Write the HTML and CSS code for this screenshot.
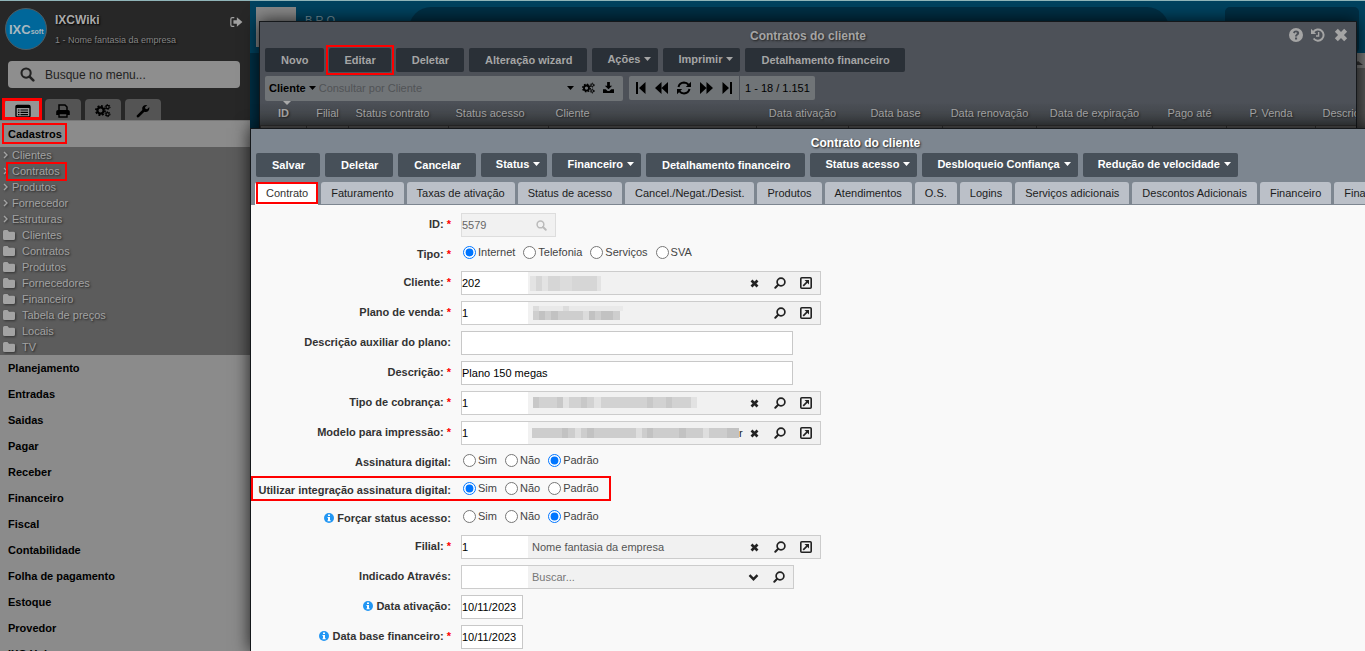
FILE: index.html
```html
<!DOCTYPE html>
<html lang="pt-BR">
<head>
<meta charset="utf-8">
<title>IXCWiki</title>
<link rel="stylesheet" href="styles.css">
</head>
<body>
<svg class="sprite" aria-hidden="true">
  <symbol id="search" viewBox="0 0 16 16"><circle cx="6.5" cy="6.5" r="4.9" fill="none" stroke="currentColor" stroke-width="2.2"/><path d="M10.2 10.2l4 4" stroke="currentColor" stroke-width="2.8" stroke-linecap="round"/></symbol>
  <symbol id="lens" viewBox="0 0 12 12"><circle cx="7" cy="5" r="3.9" fill="none" stroke="currentColor" stroke-width="1.7"/><path d="M4.2 7.800L1.300 10.700" stroke="currentColor" stroke-width="2" stroke-linecap="round"/></symbol>
  <symbol id="logout" viewBox="0 0 16 14"><path d="M6 2H3.500Q2 2 2 3.500v7Q2 12 3.500 12H6" fill="none" stroke="currentColor" stroke-width="1.400"/><path d="M5 5h4V1.500l6.500 5.500L9 12.500V9H5z" fill="currentColor"/></symbol>
  <symbol id="list" viewBox="0 0 16 14"><rect x="1" y="1.5" width="14" height="11.5" rx="1.2" fill="none" stroke="currentColor" stroke-width="1.4"/><path d="M1 1h14v3H1z" fill="currentColor"/><path d="M3 6h1.500M5.500 6H13M3 8.300h1.500M5.500 8.300H13M3 10.600h1.500M5.500 10.600H13" stroke="currentColor" stroke-width="1.2"/></symbol>
  <symbol id="print" viewBox="0 0 14 14"><path d="M3 6.500V1h6l2 2v3.500" fill="none" stroke="currentColor" stroke-width="1.500"/><path d="M2 6h10q1.800 0 1.800 1.800V11H11V9.200H3V11H.2V7.800Q.2 6 2 6z" fill="currentColor"/><path d="M3 9.500h8V13H3z" fill="none" stroke="currentColor" stroke-width="1.400"/></symbol>
  <symbol id="cogs" viewBox="0 0 16 14"><g fill="none" stroke="currentColor"><circle cx="5.500" cy="7" r="3.100" stroke-width="2.200"/><circle cx="5.500" cy="7" r="4.600" stroke-width="1.800" stroke-dasharray="1.900 1.710"/><circle cx="12.600" cy="3.500" r="1.600" stroke-width="1.200"/><circle cx="12.600" cy="3.500" r="2.500" stroke-width="1" stroke-dasharray="1.300 1.310"/><circle cx="12.600" cy="10.700" r="1.600" stroke-width="1.200"/><circle cx="12.600" cy="10.700" r="2.500" stroke-width="1" stroke-dasharray="1.300 1.310"/></g></symbol>
  <symbol id="wrench" viewBox="0 0 14 14"><path d="M1 11.200L6.300 6Q5.600 3.500 7.200 2 8.800.5 11.300 1L9 3.200l.4 1.600 1.700.4L13.300 3q.5 2.400-1 3.900-1.600 1.500-4 .9L3 13.100Q2 14 1 13T1 11.200z" fill="currentColor"/></symbol>
  <symbol id="folder" viewBox="0 0 12 10"><path d="M1.500 0h3L6 1.700h4.500Q12 1.700 12 3v5.500Q12 10 10.500 10h-9Q0 10 0 8.500v-7Q0 0 1.500 0z" fill="currentColor"/></symbol>
  <symbol id="chevron" viewBox="0 0 5 8"><path d="M1 1l3 3-3 3" fill="none" stroke="currentColor" stroke-width="1.400"/></symbol>
  <symbol id="caret" viewBox="0 0 7 4"><path d="M0 0h7L3.500 4z" fill="currentColor"/></symbol>
  <symbol id="download" viewBox="0 0 12 12"><path d="M4.500 0h3v4H10L6 8 2 4h2.500z" fill="currentColor"/><path d="M0 8h3l2 1.800h2L9 8h3v4H0z" fill="currentColor"/></symbol>
  <symbol id="first" viewBox="0 0 10 12"><path d="M0 0h2v12H0zM9.500 0v12L3 6z" fill="currentColor"/></symbol>
  <symbol id="prev" viewBox="0 0 13 12"><path d="M6.500 0v12L0 6zM13 0v12L6.500 6z" fill="currentColor"/></symbol>
  <symbol id="refresh" viewBox="0 0 14 14"><path d="M1.500 6Q2.500 1.800 7 1.600q2.800 0 4.700 2.300M12.500 8Q11.500 12.200 7 12.400q-2.800 0-4.700-2.300" fill="none" stroke="currentColor" stroke-width="2"/><path d="M14 .8V6H8.800zM0 13.200V8h5.200z" fill="currentColor"/></symbol>
  <symbol id="help" viewBox="0 0 14 14"><path fill-rule="evenodd" d="M7 0a7 7 0 100 14A7 7 0 007 0zM6 9.500h2.100v2H6zM4 4.800Q4.500 2.500 7 2.500c2 0 3.200 1.200 3.200 2.600 0 1.900-2.100 2-2.100 3.500H6c0-2.400 1.900-2.500 1.900-3.400 0-1.300-1.900-1.100-2.200.3z" fill="currentColor"/></symbol>
  <symbol id="history" viewBox="0 0 14 14"><path d="M2.300 4a5.600 5.600 0 11.300 6.500" fill="none" stroke="currentColor" stroke-width="2"/><path d="M0 .8V6h5.200z" fill="currentColor"/><path d="M7.600 4v4H5" fill="none" stroke="currentColor" stroke-width="1.400"/></symbol>
  <symbol id="close" viewBox="0 0 12 12"><path d="M2 2l8 8M10 2l-8 8" stroke="currentColor" stroke-width="3.600"/></symbol>
  <symbol id="open" viewBox="0 0 12 12"><rect x=".8" y=".8" width="10.400" height="10.400" rx="1" fill="none" stroke="currentColor" stroke-width="1.600"/><path d="M3.200 8.800l4-4" stroke="currentColor" stroke-width="1.700"/><path d="M4.500 3H9v4.500z" fill="currentColor"/></symbol>
  <symbol id="down" viewBox="0 0 10 7"><path d="M1 1.200l4 4 4-4" fill="none" stroke="currentColor" stroke-width="2.400"/></symbol>
  <symbol id="info" viewBox="0 0 10 10"><circle cx="5" cy="5" r="5" fill="#2196f3"/><path d="M4 1.500h2V3H4zM3.500 4H6v3.300h.7v1H3.500v-1H4V5h-.5z" fill="#fff"/></symbol>
</svg>

<div class="app">
  <aside class="sidebar">
    <header class="profile">
      <svg class="avatar" viewBox="0 0 42 42" role="img" aria-label="IXCsoft"><circle cx="21" cy="21" r="20.500" fill="#00679a" stroke="#4f5c62"/><text x="4" y="26" class="logo-main">IXC<tspan class="logo-sub">soft</tspan></text></svg>
      <div class="who"><strong>IXCWiki</strong><span>1 - Nome fantasia da empresa</span></div>
      <button class="plain logout" aria-label="Sair"><svg width="14" height="12"><use href="#logout"/></svg></button>
    </header>
    <label class="menu-search"><svg width="15" height="15"><use href="#search"/></svg><input type="text" aria-label="Busque no menu" placeholder="Busque no menu..."></label>
    <nav class="side-tabs">
      <button class="active marked" aria-label="Cadastros"><svg width="16" height="14"><use href="#list"/></svg></button>
      <button aria-label="Relatórios"><svg width="14" height="14"><use href="#print"/></svg></button>
      <button aria-label="Configurações"><svg width="16" height="15"><use href="#cogs"/></svg></button>
      <button aria-label="Ferramentas"><svg width="14" height="14"><use href="#wrench"/></svg></button>
    </nav>
    <nav class="menu">
      <a href="#" class="group"><span class="marked cadastros">Cadastros</span></a>
      <div class="submenu">
        <a href="#"><svg width="5" height="8"><use href="#chevron"/></svg>Clientes</a>
        <a href="#"><svg width="5" height="8"><use href="#chevron"/></svg><span class="marked contratos">Contratos</span></a>
        <a href="#"><svg width="5" height="8"><use href="#chevron"/></svg>Produtos</a>
        <a href="#"><svg width="5" height="8"><use href="#chevron"/></svg>Fornecedor</a>
        <a href="#"><svg width="5" height="8"><use href="#chevron"/></svg>Estruturas</a>
        <a href="#" class="dir"><svg width="12" height="10"><use href="#folder"/></svg>Clientes</a>
        <a href="#" class="dir"><svg width="12" height="10"><use href="#folder"/></svg>Contratos</a>
        <a href="#" class="dir"><svg width="12" height="10"><use href="#folder"/></svg>Produtos</a>
        <a href="#" class="dir"><svg width="12" height="10"><use href="#folder"/></svg>Fornecedores</a>
        <a href="#" class="dir"><svg width="12" height="10"><use href="#folder"/></svg>Financeiro</a>
        <a href="#" class="dir"><svg width="12" height="10"><use href="#folder"/></svg>Tabela de preços</a>
        <a href="#" class="dir"><svg width="12" height="10"><use href="#folder"/></svg>Locais</a>
        <a href="#" class="dir"><svg width="12" height="10"><use href="#folder"/></svg>TV</a>
      </div>
      <a href="#" class="group">Planejamento</a>
      <a href="#" class="group">Entradas</a>
      <a href="#" class="group">Saidas</a>
      <a href="#" class="group">Pagar</a>
      <a href="#" class="group">Receber</a>
      <a href="#" class="group">Financeiro</a>
      <a href="#" class="group">Fiscal</a>
      <a href="#" class="group">Contabilidade</a>
      <a href="#" class="group">Folha de pagamento</a>
      <a href="#" class="group">Estoque</a>
      <a href="#" class="group">Provedor</a>
      <a href="#" class="group">IXC Hub</a>
    </nav>
  </aside>

  <main class="desktop">
    <div class="backdrop">
      <div class="photo"></div><span class="org">B R O —</span><div class="pill"></div><div class="card"></div>
    </div>
    <div class="scroll"><svg width="6" height="4" viewBox="0 0 6 4"><path d="M0 4V1l1-1 5 4z" fill="#333"/></svg></div>

    <section class="window list-window">
      <div class="window-icons">
        <button class="plain" aria-label="Ajuda"><svg width="14" height="14"><use href="#help"/></svg></button>
        <button class="plain" aria-label="Histórico"><svg width="14" height="14"><use href="#history"/></svg></button>
        <button class="plain" aria-label="Fechar"><svg width="16" height="14"><use href="#close"/></svg></button>
      </div>
      <h2>Contratos do cliente</h2>
      <div class="actions">
        <button>Novo</button><button class="marked">Editar</button><button>Deletar</button><button>Alteração wizard</button>
        <button class="drop">Ações<svg width="7" height="4"><use href="#caret"/></svg></button>
        <button class="drop">Imprimir<svg width="7" height="4"><use href="#caret"/></svg></button>
        <button>Detalhamento financeiro</button>
      </div>
      <div class="filters">
        <div class="query">
          <button class="plain field-picker">Cliente<svg width="7" height="4"><use href="#caret"/></svg></button>
          <input type="text" aria-label="Consultar por Cliente" placeholder="Consultar por Cliente">
          <button class="plain" aria-label="Opções"><svg width="7" height="4"><use href="#caret"/></svg></button>
          <button class="plain" aria-label="Configurar"><svg width="13" height="12"><use href="#cogs"/></svg></button>
          <button class="plain" aria-label="Exportar"><svg width="11" height="11"><use href="#download"/></svg></button>
        </div>
        <div class="pager">
          <div class="pages">
            <button class="plain" aria-label="Primeira"><svg width="10" height="12"><use href="#first"/></svg></button>
            <button class="plain" aria-label="Anterior"><svg width="13" height="12"><use href="#prev"/></svg></button>
            <button class="plain" aria-label="Atualizar"><svg width="14" height="14"><use href="#refresh"/></svg></button>
            <button class="plain flip" aria-label="Próxima"><svg width="13" height="12"><use href="#prev"/></svg></button>
            <button class="plain flip" aria-label="Última"><svg width="10" height="12"><use href="#first"/></svg></button>
          </div>
          <span class="count">1 - 18 / 1.151</span>
        </div>
      </div>
      <div class="grid">
        <table>
          <colgroup><col class="c46"><col class="c42"><col class="c100"><col class="c100"><col class="c208"><col class="c92"><col class="c94"><col class="c94"><col class="c116"><col class="c74"><col class="c89"><col class="c100"></colgroup>
          <thead><tr><th class="sorted">ID</th><th>Filial</th><th class="left">Status contrato</th><th class="left">Status acesso</th><th class="left">Cliente</th><th>Data ativação</th><th>Data base</th><th>Data renovação</th><th>Data de expiração</th><th>Pago até</th><th>P. Venda</th><th class="left">Descrição</th></tr></thead>
          <tbody><tr><td></td><td></td><td></td><td></td><td></td><td></td><td></td><td></td><td></td><td></td><td></td><td></td></tr></tbody>
        </table>
      </div>
    </section>

    <section class="window form-window">
      <h2>Contrato do cliente</h2>
      <div class="actions">
        <button>Salvar</button><button>Deletar</button><button>Cancelar</button>
        <button class="drop">Status<svg width="7" height="4"><use href="#caret"/></svg></button>
        <button class="drop">Financeiro<svg width="7" height="4"><use href="#caret"/></svg></button>
        <button>Detalhamento financeiro</button>
        <button class="drop">Status acesso<svg width="7" height="4"><use href="#caret"/></svg></button>
        <button class="drop">Desbloqueio Confiança<svg width="7" height="4"><use href="#caret"/></svg></button>
        <button class="drop">Redução de velocidade<svg width="7" height="4"><use href="#caret"/></svg></button>
      </div>
      <nav class="tabs">
        <button class="active marked">Contrato</button><button>Faturamento</button><button>Taxas de ativação</button><button>Status de acesso</button><button>Cancel./Negat./Desist.</button><button>Produtos</button><button>Atendimentos</button><button>O.S.</button><button>Logins</button><button>Serviços adicionais</button><button>Descontos Adicionais</button><button>Financeiro</button><button>Financeiro</button>
      </nav>
      <form class="form">
        <div class="row"><label for="id">ID: <i>*</i></label><div class="lookup locked"><input id="id" type="text" value="5579" disabled><svg class="faint" width="11" height="11"><use href="#search"/></svg></div></div>
        <div class="row radios"><span class="label">Tipo: <i>*</i></span><div class="options"><label><input type="radio" name="tipo" checked>Internet</label><label><input type="radio" name="tipo">Telefonia</label><label><input type="radio" name="tipo">Serviços</label><label><input type="radio" name="tipo">SVA</label></div></div>
        <div class="row"><label for="cliente">Cliente: <i>*</i></label><div class="lookup"><input id="cliente" type="text" value="202"><span class="value"><svg width="73" height="16"><path fill="#e3e3e3" d="M2 1h71v15H2z"/><path fill="#d6d6d6" d="M8 1h6v15H8zM20 1h12v15H20zM44 1h25v15H44z"/><path fill="#dcdcdc" d="M32 1h12v15H32z"/></svg></span><button type="button" class="plain" aria-label="Limpar"><svg width="9" height="9"><use href="#close"/></svg></button><button type="button" class="plain" aria-label="Buscar"><svg width="12" height="12"><use href="#lens"/></svg></button><button type="button" class="plain" aria-label="Abrir"><svg width="12" height="12"><use href="#open"/></svg></button></div></div>
        <div class="row"><label for="plano">Plano de venda: <i>*</i></label><div class="lookup"><input id="plano" type="text" value="1"><span class="value"><svg width="96" height="14"><path fill="#e9e9e9" d="M5 0h90v5H5z"/><path fill="#cecece" d="M5 5h87v9H5z"/><path fill="#c2c2c2" d="M11 5h6v9h-6zM23 5h7v9h-7zM61 5h6v9h-6zM73 5h12v9H73z"/><path fill="#dcdcdc" d="M5 0h6v5H5zM35 0h6v5h-6zM55 5h6v9h-6z"/></svg></span><button type="button" class="plain" aria-label="Buscar"><svg width="12" height="12"><use href="#lens"/></svg></button><button type="button" class="plain" aria-label="Abrir"><svg width="12" height="12"><use href="#open"/></svg></button></div></div>
        <div class="row"><label for="aux">Descrição auxiliar do plano:</label><input id="aux" class="text" type="text"></div>
        <div class="row"><label for="desc">Descrição: <i>*</i></label><input id="desc" class="text" type="text" value="Plano 150 megas"></div>
        <div class="row"><label for="cobranca">Tipo de cobrança: <i>*</i></label><div class="lookup"><input id="cobranca" type="text" value="1"><span class="value"><svg width="169" height="12"><path fill="#d2d2d2" d="M5 0h158v11H5z"/><path fill="#c8c8c8" d="M5 0h6v11H5zM29 0h6v11h-6zM53 0h6v11h-6zM119 0h6v11h-6zM138 0h6v11h-6z"/><path fill="#e2e2e2" d="M35 0h6v11h-6zM66 0h7v11h-7zM163 0h6v11h-6z"/></svg></span><button type="button" class="plain" aria-label="Limpar"><svg width="9" height="9"><use href="#close"/></svg></button><button type="button" class="plain" aria-label="Buscar"><svg width="12" height="12"><use href="#lens"/></svg></button><button type="button" class="plain" aria-label="Abrir"><svg width="12" height="12"><use href="#open"/></svg></button></div></div>
        <div class="row"><label for="modelo">Modelo para impressão: <i>*</i></label><div class="lookup"><input id="modelo" type="text" value="1"><span class="value"><svg width="211" height="10"><path fill="#cdcdcd" d="M4 0h207v10H4z"/><path fill="#c2c2c2" d="M34 0h6v10h-6zM59 0h7v10h-7zM119 0h6v10h-6zM151 0h7v10h-7zM199 0h12v10h-12z"/><path fill="#dedede" d="M47 0h6v10h-6zM108 0h6v10h-6zM175 0h6v10h-6z"/></svg>r</span><button type="button" class="plain" aria-label="Limpar"><svg width="9" height="9"><use href="#close"/></svg></button><button type="button" class="plain" aria-label="Buscar"><svg width="12" height="12"><use href="#lens"/></svg></button><button type="button" class="plain" aria-label="Abrir"><svg width="12" height="12"><use href="#open"/></svg></button></div></div>
        <div class="row radios"><span class="label">Assinatura digital:</span><div class="options"><label><input type="radio" name="ass">Sim</label><label><input type="radio" name="ass">Não</label><label><input type="radio" name="ass" checked>Padrão</label></div></div>
        <div class="row radios marked"><span class="label">Utilizar integração assinatura digital:</span><div class="options"><label><input type="radio" name="int" checked>Sim</label><label><input type="radio" name="int">Não</label><label><input type="radio" name="int">Padrão</label></div></div>
        <div class="row radios"><span class="label"><svg width="10" height="10"><use href="#info"/></svg>Forçar status acesso:</span><div class="options"><label><input type="radio" name="forcar">Sim</label><label><input type="radio" name="forcar">Não</label><label><input type="radio" name="forcar" checked>Padrão</label></div></div>
        <div class="row"><label for="filial">Filial: <i>*</i></label><div class="lookup"><input id="filial" type="text" value="1"><span class="value text-value">Nome fantasia da empresa</span><button type="button" class="plain" aria-label="Limpar"><svg width="9" height="9"><use href="#close"/></svg></button><button type="button" class="plain" aria-label="Buscar"><svg width="12" height="12"><use href="#lens"/></svg></button><button type="button" class="plain" aria-label="Abrir"><svg width="12" height="12"><use href="#open"/></svg></button></div></div>
        <div class="row"><label for="indicado">Indicado Através:</label><div class="lookup short"><input id="indicado" type="text"><span class="value text-value hint">Buscar...</span><button type="button" class="plain" aria-label="Expandir"><svg width="11" height="7"><use href="#down"/></svg></button><button type="button" class="plain" aria-label="Buscar"><svg width="12" height="12"><use href="#lens"/></svg></button></div></div>
        <div class="row"><label for="ativacao"><svg width="10" height="10"><use href="#info"/></svg>Data ativação:</label><input id="ativacao" class="text date" type="text" value="10/11/2023"></div>
        <div class="row"><label for="base"><svg width="10" height="10"><use href="#info"/></svg>Data base financeiro: <i>*</i></label><input id="base" class="text date" type="text" value="10/11/2023"></div>
      </form>
    </section>
  </main>
</div>
</body>
</html>
```
FILE: styles.css
```css
* { box-sizing: border-box; }
body {
  margin: 0;
  overflow: hidden;
  font: 11px/16px "Liberation Sans", Arial, sans-serif;
  color: #333;
}
button, input { font: inherit; color: inherit; }
button { margin: 0; cursor: pointer; }
svg { display: block; flex: none; }
a { color: inherit; text-decoration: none; }
h2 { margin: 0; text-align: center; font-size: 12px; line-height: 16px; }
.sprite { position: absolute; width: 0; height: 0; }
.plain { display: flex; align-items: center; justify-content: center; padding: 0; border: 0; background: none; }

.app {
  display: grid;
  grid-template-columns: 250px 1fr;
  height: 100vh;
  overflow: hidden;
  border-top: 1px solid #8fb4b8;
}

/* Red callout frames */
.marked { position: relative; }
.marked::after {
  content: "";
  position: absolute;
  inset: -3px;
  border: 2px solid #f00;
  pointer-events: none;
  z-index: 2;
}

/* Sidebar */
.sidebar { overflow: hidden; background: #272727; }
.profile { display: flex; gap: 8px; padding: 7px 7px 0 5px; height: 60px; }
.avatar { width: 42px; height: 42px; }
.logo-main { font: 900 13px "Liberation Sans", Arial, sans-serif; fill: #a7b8c0; }
.logo-sub { font-size: 7px; }
.who { flex: 1; padding-top: 4px; color: #aaa; text-shadow: 1px 1px 2px #000; }
.who strong { display: block; font-size: 12px; line-height: 16px; }
.who span { display: block; padding-top: 5px; font-size: 9px; line-height: 14px; color: #858585; }
.logout { height: 28px; color: #a0a0a0; }
.menu-search {
  display: flex;
  align-items: center;
  gap: 10px;
  margin: 0 10px 0 8px;
  padding-left: 12px;
  height: 27px;
  border-radius: 4px;
  background: #8e8e8e;
  color: #222;
}
.menu-search input { flex: 1; min-width: 0; border: 0; padding: 0; background: none; outline: 0; font-size: 12px; }
.menu-search input::placeholder { color: #222; opacity: 1; }
.side-tabs { display: flex; gap: 4px; padding: 11px 0 0 5px; }
.side-tabs button {
  display: flex;
  align-items: center;
  justify-content: center;
  width: 36px;
  height: 21px;
  padding: 2px 0 0;
  border: 0;
  border-radius: 4px 4px 0 0;
  background: #545454;
  color: #000;
}
.side-tabs .active { background: #959595; }
.side-tabs .marked::after { inset: -1px -1px 0 -3px; border-width: 3px; }
.menu { background: #8b8b8b; border-top: 1px solid #777; }
.group { display: flex; align-items: center; height: 26px; padding-left: 8px; font-weight: bold; color: #000; }
.cadastros::after { inset: -3px -5px -2px -6px; }
.submenu { background: #5c5c5c; color: #a3a3a3; text-shadow: 1px 1px 2px #222; }
.submenu a { display: flex; align-items: center; gap: 4px; height: 16px; padding-left: 3px; }
.submenu .dir { gap: 7px; }
.submenu svg { filter: drop-shadow(1px 1px 1px #333); }
.contratos::after { inset: -1px -7px -2px -6px; }

/* Desktop behind the windows */
.desktop { position: relative; min-width: 0; background: #002f45; }
.backdrop { display: flex; height: 52px; padding: 6px 6px 0; background: #00425f; }
.photo { width: 40px; height: 40px; background: #888; }
.org { padding: 5px 0 0 9px; color: #7c98a2; }
.pill { flex: 1; margin: 0 56px 0 60px; border-radius: 22px; background: #002f45; }
.card { width: 134px; border-radius: 5px; background: #002f45; }
.scroll { position: absolute; top: 52px; right: 0; width: 8px; height: 90px; padding-top: 6px; background: #555; border-top: 15px solid #777; }
.scroll svg { margin-top: -13px; }

/* Windows */
.window { position: absolute; border: 1px solid #15181b; box-shadow: 0 0 16px rgba(0, 0, 0, .8); }
.list-window { top: 20px; left: 9px; right: 8px; height: 110px; padding-top: 6px; background: linear-gradient(#4d5158 80px, #3c4043 104px); color: #a5a5a5; }
.form-window { top: 127px; left: 0; right: -116px; bottom: 0; display: flex; flex-direction: column; padding-top: 6px; background: #7d8690; color: #fff; border-bottom: 0; }
.window h2 { text-shadow: 1px 1px 2px #222; }
.window-icons { position: absolute; top: 6px; right: 7px; display: flex; gap: 8px; }
.window-icons button { height: 14px; }
.actions { display: flex; gap: 5px; padding: 4px 5px 0; white-space: nowrap; }
.actions button {
  display: flex;
  align-items: center;
  gap: 4px;
  height: 24px;
  padding: 0 15px 0 16px;
  border: 0;
  border-radius: 2px;
  background: #475059;
  font-weight: bold;
}
.actions .drop { padding: 0 7px 2px 15px; }
.form-window .actions { padding-top: 2px; }
.list-window .actions button { background: #2a3037; }
.filters { display: flex; gap: 6px; padding: 4px 5px 0; color: #000; }
.query { display: flex; align-items: center; gap: 8px; width: 358px; height: 25px; padding: 0 9px 2px 4px; border-radius: 2px; background: #707477; }
.query input { flex: 1; min-width: 0; border: 0; padding: 0; background: none; outline: 0; }
.query input::placeholder { color: #505356; opacity: 1; }
.field-picker { gap: 3px; font-weight: bold; margin-right: -5px; }
.pager { display: flex; gap: 1px; height: 24px; }
.pages { display: flex; align-items: center; gap: 9px; padding: 0 7px; background: #707477; border-radius: 2px 0 0 2px; }
.flip { transform: scaleX(-1); }
.count { padding: 4px 5px; background: #707477; border-radius: 0 2px 2px 0; }
.grid { overflow: hidden; }
.grid table { width: 1155px; table-layout: fixed; border-collapse: collapse; }
.grid th { position: relative; height: 24px; padding: 0; font-weight: normal; white-space: nowrap; text-shadow: 1px 1px 2px #222; }
.grid .left { text-align: left; padding-left: 7px; }
.grid .sorted { font-weight: bold; }
.sorted::before {
  content: "";
  position: absolute;
  top: 0;
  left: 22px;
  border: 4px solid transparent;
  border-top-color: #aaa;
  border-bottom: 0;
}
.grid td { height: 6px; padding: 0; border: 1px solid #333; background: #555; }
.c42 { width: 42px; } .c46 { width: 46px; } .c74 { width: 74px; } .c89 { width: 89px; }
.c92 { width: 92px; } .c94 { width: 94px; } .c100 { width: 100px; } .c116 { width: 116px; } .c208 { width: 208px; }

.tabs { display: flex; flex: none; gap: 3px; padding: 5px 0 0 4px; overflow: hidden; white-space: nowrap; }
.tabs button {
  flex: none;
  height: 22px;
  margin-bottom: 1px;
  padding: 0 10px;
  border: 0;
  border-radius: 3px 3px 0 0;
  background: #bbc0c8;
  color: #1c1c1c;
}
.tabs .active { height: 23px; margin-bottom: 0; padding: 0 10px 1px 11px; background: #fff; color: #333; }
.tabs .marked::after { inset: 0 0 1px 1px; }

/* Form */
.form { flex: 1; min-height: 0; overflow: hidden; padding-top: 5px; background: #f9f9f9; color: #333; }
.row { display: grid; grid-template-columns: 200px auto; justify-content: start; column-gap: 10px; align-items: center; height: 30px; }
.row > label, .label { display: flex; align-items: center; justify-content: flex-end; gap: 3px; font-weight: bold; white-space: nowrap; padding-bottom: 2px; }
.row i { font-style: normal; color: #f00; }
.row.radios { height: 28px; }
.radios .label { padding: 0; }
.radios.marked { width: 360px; }
.radios.marked::after { inset: 0 0 3px 0; }
.options { display: flex; gap: 8px; padding: 0 0 4px 2px; color: #444; }
.options label { display: flex; align-items: center; gap: 2px; }
.options input { width: 13px; height: 13px; margin: 0; }
.text { width: 332px; height: 24px; padding: 0; border: 1px solid #c8c8c8; background: #fff; color: #000; }
.date { width: 62px; }
.lookup { display: flex; align-items: center; width: 360px; height: 24px; padding-right: 8px; border: 1px solid #ccc; background: #f1f1f1; color: #222; }
.lookup input { width: 66px; height: 22px; padding: 0; border: 0; background: #fff; color: #000; }
.lookup.short { width: 333px; }
.lookup button { width: 12px; margin-left: 14px; }
.value { flex: 1; display: flex; align-items: center; height: 20px; overflow: hidden; }
.value + button { margin-left: 0; }
.text-value { padding-left: 4px; color: #555; }
.hint { color: #777; }
.lookup.locked { width: 95px; border-color: #ddd; justify-content: space-between; }
.lookup.locked input { background: none; color: #666; }
.faint { color: #bbb; }
```
